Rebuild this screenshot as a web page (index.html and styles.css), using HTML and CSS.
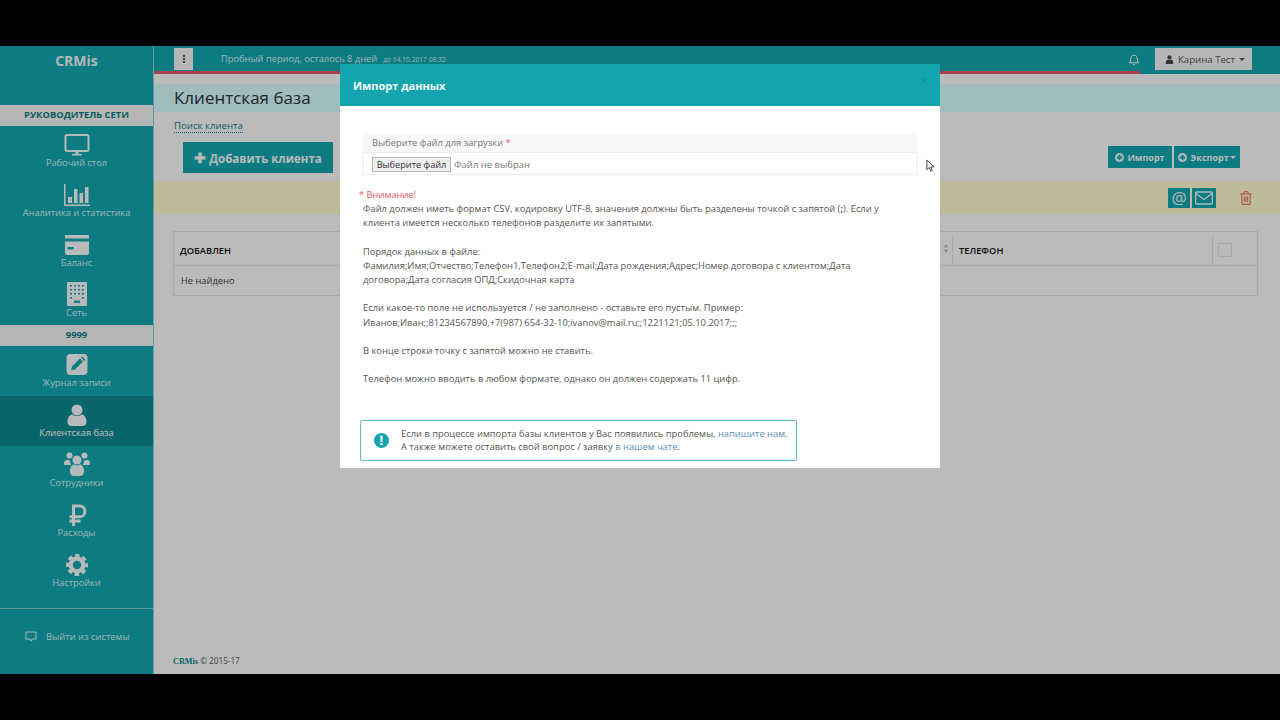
FILE: index.html
```html
<!DOCTYPE html>
<html lang="en">
<head>
  <meta charset="UTF-8" />
  <title>CRMis</title>
  <link rel="stylesheet" href="styles.css">
</head>
<body>

<div class="app">
  <!-- Sidebar -->
  <aside class="sidebar">
    <div class="logo">CRMis</div>
    <div class="band">РУКОВОДИТЕЛЬ СЕТИ</div>
    <a class="item">
      <svg class="ico" viewBox="0 0 26 22"><path fill="none" stroke="currentColor" stroke-width="2" d="M3 1h20a1.5 1.5 0 0 1 1.5 1.5v13a1.5 1.5 0 0 1-1.5 1.5H3a1.5 1.5 0 0 1-1.5-1.5v-13A1.5 1.5 0 0 1 3 1z"/><path fill="currentColor" d="M11.5 17h3v3h3.500v1.500H8V20h3.500z"/></svg>
      <span>Рабочий стол</span>
    </a>
    <a class="item">
      <svg class="ico" viewBox="0 0 26 22"><path fill="currentColor" d="M0 0h1.500v20.500H26V22H0zM4 13h4v6H4zM10 5h3.500v14H10zM15.500 9H19v10h-3.500zM21 3h3.500v16H21z"/></svg>
      <span>Аналитика и статистика</span>
    </a>
    <a class="item">
      <svg class="ico" viewBox="0 0 26 22"><path fill="currentColor" fill-rule="evenodd" d="M1 1h24v3.500H1zM1 7.500h24V19a2 2 0 0 1-2 2H3a2 2 0 0 1-2-2zM3.500 13v2.500h6V13z"/></svg>
      <span>Баланс</span>
    </a>
    <a class="item">
      <svg class="ico ico-tall" viewBox="0 0 26 24"><path fill="currentColor" fill-rule="evenodd" d="M4 0h18a1 1 0 0 1 1 1v22a1 1 0 0 1-1 1H4a1 1 0 0 1-1-1V1a1 1 0 0 1 1-1zM6 3v1.500h2V3zM10 3v1.500h2V3zM14 3v1.500h2V3zM18 3v1.500h2V3zM6 7v1.500h2V7zM10 7v1.500h2V7zM14 7v1.500h2V7zM18 7v1.500h2V7zM6 11v1.500h2V11zM10 11v1.500h2V11zM14 11v1.500h2V11zM18 11v1.500h2V11zM6 15v1.500h2V15zM18 15v1.500h2V15zM10 18.500V21h6v-2.500z"/></svg>
      <span>Сеть</span>
    </a>
    <div class="band band-num">9999</div>
    <a class="item">
      <svg class="ico" viewBox="0 0 26 22"><rect x="2.500" y="0" width="21" height="21" rx="4" fill="currentColor"/><path fill="#11a4ae" d="M16 4.500l3 3-8 8-4 1 1-4zM17 3.500l1-1 3.500 3.500-1 1z"/></svg>
      <span>Журнал записи</span>
    </a>
    <a class="item active">
      <svg class="ico" viewBox="0 0 26 22"><circle cx="13" cy="6" r="5.500" fill="currentColor"/><path fill="currentColor" d="M3.500 18c0-5 2.500-7.500 5-7.500 1 1 2.500 1.500 4.500 1.500s3.500-.5 4.500-1.500c2.500 0 5 2.500 5 7.500 0 2.500-1.500 4-4 4H7.500c-2.500 0-4-1.500-4-4z"/></svg>
      <span>Клиентская база</span>
    </a>
    <a class="item">
      <svg class="ico ico-tall" viewBox="0 0 26 24"><g fill="currentColor"><circle cx="5.500" cy="3.500" r="3"/><circle cx="20.500" cy="3.500" r="3"/><path d="M0 12c0-2.500 1-4 3-4h2.500L7 13H1.500C.5 13 0 12.800 0 12zM26 12c0-2.500-1-4-3-4h-2.500L19 13h5.500c1 0 1.500-.2 1.500-1z"/><circle cx="13" cy="8" r="4.500"/><path d="M6 19c0-4 2-6.500 4-6.500 1 .7 2 1 3 1s2-.3 3-1c2 0 4 2.500 4 6.500 0 3-1.500 5-4 5h-6c-2.500 0-4-2-4-5z"/></g></svg>
      <span>Сотрудники</span>
    </a>
    <a class="item">
      <svg class="ico" viewBox="0 0 26 22"><path fill="none" stroke="currentColor" stroke-width="3" d="M9.500 22V2h6a5.300 5.300 0 0 1 0 10.800H5.500M5.500 17h11"/></svg>
      <span>Расходы</span>
    </a>
    <a class="item">
      <svg class="ico" viewBox="0 0 26 22"><circle cx="13" cy="11" r="6.300" fill="none" stroke="currentColor" stroke-width="4.200"/><circle cx="13" cy="11" r="9.500" fill="none" stroke="currentColor" stroke-width="3" stroke-dasharray="4.500 2.960" stroke-dashoffset="2.250"/></svg>
      <span>Настройки</span>
    </a>
    <a class="logout">
      <svg class="logout-ico" viewBox="0 0 12 11"><path fill="none" stroke="currentColor" stroke-width="1.100" d="M1 1h10v7H7.500L6 9.800 4.500 8H1z"/></svg>
      <span>Выйти из системы</span>
    </a>
  </aside>

  <main class="main">
    <!-- Top bar -->
    <div class="topbar">
      <button class="menu-btn"><i></i><i></i><i></i></button>
      <span class="trial">Пробный период, осталось 8 дней</span>
      <span class="trial-date">до 14.10.2017 08:32</span>
      <svg class="bell" viewBox="0 0 12 12"><path fill="none" stroke="currentColor" stroke-width="1" d="M6 1.200c-2.200 0-3.200 1.600-3.200 3.600 0 2-.6 3-1.500 4h9.400c-.9-1-1.500-2-1.500-4 0-2-1-3.600-3.200-3.600zM4.800 10.200c.3.700 2.100.7 2.400 0"/></svg>
      <button class="user-btn">
        <svg class="user-ico" viewBox="0 0 10 10"><circle cx="5" cy="2.600" r="2.300" fill="currentColor"/><path fill="currentColor" d="M.8 10c-.3-3 1-4.800 2.300-5 .6.500 3.200.5 3.800 0 1.300.2 2.600 2 2.300 5z"/></svg>
        Карина Тест <b class="caret"></b>
      </button>
    </div>
    <div class="progress"></div>

    <div class="title-band"><h1>Клиентская база</h1></div>
    <div class="search-row"><a class="search-link">Поиск клиента</a></div>

    <div class="actions">
      <button class="add-btn"><span class="plus">✚</span> Добавить клиента</button>
      <div class="actions-right">
        <button class="small-btn"><svg class="circle-ico" viewBox="0 0 10 10"><path fill="currentColor" fill-rule="evenodd" d="M5 0a5 5 0 1 1 0 10A5 5 0 0 1 5 0zM4 2v2H2v2h2v2h2V6h2V4H6V2z"/></svg> Импорт</button>
        <button class="small-btn wide"><svg class="circle-ico" viewBox="0 0 10 10"><path fill="currentColor" fill-rule="evenodd" d="M5 0a5 5 0 1 1 0 10A5 5 0 0 1 5 0zM4 2v2H2v2h2v2h2V6h2V4H6V2z"/></svg> Экспорт<b class="caret"></b></button>
      </div>
    </div>

    <div class="tools">
      <span class="tool-btn at">@</span>
      <span class="tool-btn mail"><svg viewBox="0 0 18 14"><path fill="none" stroke="currentColor" stroke-width="1.300" d="M1.700 1h14.600a1 1 0 0 1 1 1v10a1 1 0 0 1-1 1H1.700a1 1 0 0 1-1-1V2a1 1 0 0 1 1-1zM1 2.500l8 6 8-6"/></svg></span>
      <svg class="trash" viewBox="0 0 12 14"><path fill="none" stroke="currentColor" stroke-width="1.100" d="M0 3h12M4 3V1.500C4 1 4.400.6 5 .6h2c.6 0 1 .4 1 .9V3M1.800 3v9.300c0 .7.400 1.100 1 1.100h6.400c.6 0 1-.4 1-1.100V3M4.300 5.500v5.500M6 5.500v5.500M7.700 5.500v5.500"/></svg>
    </div>

    <div class="table">
      <div class="table-head">
        <span class="col-date">ДОБАВЛЕН</span>
        <span class="col-sort">
          <svg viewBox="0 0 6 9"><path fill="currentColor" d="M3 0l2.500 3.500h-5zM3 9L.5 5.500h5z"/></svg>
        </span>
        <span class="col-phone">ТЕЛЕФОН</span>
        <span class="col-check"><i></i></span>
      </div>
      <div class="table-row">Не найдено</div>
    </div>

    <footer class="foot"><b>CRMis</b> © 2015-17</footer>
  </main>

  <!-- Modal -->
  <div class="backdrop">
    <div class="modal">
      <div class="modal-head">
        <span>Импорт данных</span>
        <span class="close">×</span>
      </div>
      <div class="modal-body">
        <div class="file-box">
          <div class="file-label">Выберите файл для загрузки <em>*</em></div>
          <div class="file-row">
            <button class="file-btn">Выберите файл</button>
            <span>Файл не выбран</span>
          </div>
        </div>
        <p class="warn">* Внимание!</p>
        <div class="rules">
          <p>Файл должен иметь формат CSV, кодировку UTF-8, значения должны быть разделены точкой с запятой (<b>;</b>). Если у клиента имеется несколько телефонов разделите их запятыми.</p>
          <p>Порядок данных в файле:<br>Фамилия;Имя;Отчество;Телефон1,Телефон2;E-mail;Дата рождения;Адрес;Номер договора с клиентом;Дата договора;Дата согласия ОПД;Скидочная карта</p>
          <p>Если какое-то поле не используется / не заполнено - оставьте его пустым. Пример:<br>Иванов;Иван;;81234567890,+7(987) 654-32-10;ivanov@mail.ru;;1221121;05.10.2017;;;</p>
          <p>В конце строки точку с запятой можно не ставить.</p>
          <p>Телефон можно вводить в любом формате, однако он должен содержать 11 цифр.</p>
        </div>
        <div class="notice">
          <svg class="notice-ico" viewBox="0 0 16 16"><circle cx="8" cy="8" r="8" fill="#12a5ad"/><path fill="#fff" d="M6.600 3h2.800l-.5 6.500H7.100zM6.800 10.700h2.400V13H6.800z"/></svg>
          <div>Если в процессе импорта базы клиентов у Вас появились проблемы, <a>напишите нам</a>.<br>А также можете оставить свой вопрос / заявку <a>в нашем чате</a>.</div>
        </div>
      </div>
    </div>
    <svg class="cursor" viewBox="0 0 10 15"><path fill="#fff" stroke="#333" stroke-width="1" d="M1 1v10.500l2.600-2.300 1.800 4 1.700-.8-1.800-3.900H9z"/></svg>
  </div>
</div>

</body>
</html>
```

FILE: styles.css
```css
:root {
  --teal: #12a5ad;
  --teal-side: #11a4ae;
  --teal-dark: #0d8790;
}

* {
  margin: 0;
  padding: 0;
  box-sizing: border-box;
  font-family: 'Open Sans', sans-serif;
}

body {
  background: #000;
  height: 720px;
  overflow: hidden;
}

button {
  border: none;
  cursor: pointer;
}

.app {
  position: relative;
  display: flex;
  height: 628px;
  margin-top: 46px;
  background: #fafafa;
}

/* Sidebar */
.sidebar {
  display: flex;
  flex-direction: column;
  width: 154px;
  flex-shrink: 0;
  background: var(--teal-side);
  border-right: 1px solid #7fd0d6;
  color: #eef6f7;
}

.logo {
  height: 59px;
  padding-top: 5px;
  text-align: center;
  font-size: 14px;
  font-weight: 700;
}

.band {
  height: 21px;
  line-height: 20px;
  text-align: center;
  background: #f2f2f2;
  color: #0d7b84;
  font-size: 9.4px;
  font-weight: 700;
}

.band-num {
  margin-top: -1px;
}

.item {
  display: flex;
  flex-direction: column;
  align-items: center;
  height: 50px;
  padding-top: 8px;
  font-size: 9.25px;
  line-height: 14px;
  color: #d8eef0;
}

.item.active {
  background: var(--teal-dark);
  color: #fff;
}

.ico {
  width: 26px;
  height: 22px;
  flex-shrink: 0;
  color: #f4f8f8;
}

.ico-tall {
  height: 24px;
  margin-top: -2px;
}

.logout {
  display: flex;
  align-items: center;
  gap: 9px;
  height: 66px;
  margin-top: 12px;
  padding: 0 0 10px 25px;
  border-top: 1px solid #7fd0d6;
  font-size: 9.4px;
  color: #d8eef0;
}

.logout-ico {
  width: 12px;
  height: 11px;
}

/* Main column */
.main {
  position: relative;
  display: flex;
  flex-direction: column;
  flex: 1;
  min-width: 0;
}

.topbar {
  display: flex;
  align-items: center;
  height: 25px;
  padding: 0 28px 0 20px;
  background: var(--teal-side);
  color: #d8eef0;
}

.menu-btn {
  display: flex;
  flex-direction: column;
  align-items: center;
  justify-content: center;
  gap: 1px;
  width: 19px;
  height: 22px;
  margin-top: 1px;
  background: #f2f2f2;
}

.menu-btn i {
  width: 2px;
  height: 2px;
  background: #555;
}

.trial {
  margin-left: 28px;
  font-size: 9.3px;
}

.trial-date {
  margin: 2px 0 0 6px;
  font-size: 6.7px;
}

.bell {
  width: 12px;
  height: 12px;
  margin: 2px 0 0 auto;
  color: #fff;
}

.user-btn {
  display: flex;
  align-items: center;
  gap: 4px;
  width: 97px;
  height: 22px;
  margin: 1px 0 0 15px;
  padding-left: 10px;
  background: #f2f2f2;
  color: #555;
  font-size: 9.65px;
}

.user-ico {
  width: 9px;
  height: 9px;
  color: #444;
}

.caret {
  display: inline-block;
  width: 0;
  height: 0;
  margin-left: 0;
  border-top: 3px solid currentColor;
  border-left: 3px solid transparent;
  border-right: 3px solid transparent;
  vertical-align: middle;
}

.progress {
  height: 3px;
  background: linear-gradient(to right, #e0596b 986px, var(--teal-side) 986px);
}

.title-band {
  height: 28px;
  margin-top: 10px;
  padding-left: 20px;
  background: #d6fbfd;
}

.title-band h1 {
  font-size: 17px;
  font-weight: 400;
  line-height: 28px;
  color: #2a3238;
}

.search-row {
  padding: 7px 0 0 20px;
  font-size: 9.65px;
  line-height: 14px;
}

.search-link {
  color: #12808a;
  border-bottom: 1px dotted #12808a;
}

.actions {
  display: flex;
  align-items: center;
  justify-content: space-between;
  height: 31px;
  margin-top: 9px;
  padding: 0 40px 0 29px;
}

.add-btn {
  width: 150px;
  height: 31px;
  background: var(--teal-side);
  color: #f4f8f8;
  font-size: 11.5px;
  font-weight: 700;
}

.plus {
  font-size: 14px;
}

.actions-right {
  display: flex;
  gap: 2px;
  margin-top: -1px;
}

.small-btn {
  display: flex;
  align-items: center;
  justify-content: center;
  gap: 3px;
  width: 64px;
  height: 22px;
  background: var(--teal-side);
  color: #f4f8f8;
  font-size: 9px;
  font-weight: 700;
}

.small-btn.wide {
  width: 66px;
}

.small-btn .caret {
  margin-left: -2px;
}

.circle-ico {
  width: 9px;
  height: 9px;
}

.tools {
  display: flex;
  align-items: center;
  height: 33px;
  margin-top: 8px;
  padding-left: 1014px;
  background: #fdfacb;
}

.tool-btn {
  display: flex;
  align-items: center;
  justify-content: center;
  height: 20px;
  background: var(--teal-side);
  color: #eef6f7;
}

.tool-btn.at {
  width: 22px;
  font-size: 17px;
}

.tool-btn.mail {
  width: 24px;
  margin-left: 2px;
}

.tool-btn.mail svg {
  width: 18px;
  height: 14px;
}

.trash {
  width: 12px;
  height: 14px;
  margin-left: 24px;
  color: #ee6a5e;
}

.table {
  margin: 17px 22px 0 19px;
  border: 1px solid #e2e2e2;
  color: #333;
  font-size: 9.3px;
}

.table-head {
  display: flex;
  align-items: center;
  height: 34px;
  padding-top: 3px;
  border-bottom: 1px solid #e2e2e2;
  font-size: 9.3px;
  font-weight: 600;
  color: #111;
}

.col-date {
  flex: 1;
  padding-left: 6px;
}

.col-sort {
  display: flex;
  justify-content: center;
  width: 12px;
  color: #bbb;
}

.col-sort svg {
  width: 6px;
  height: 9px;
  margin-bottom: 3px;
}

.col-phone {
  display: flex;
  align-items: center;
  width: 260px;
  height: 100%;
  padding-left: 6px;
  border-left: 1px solid #e2e2e2;
}

.col-check {
  display: flex;
  align-items: center;
  width: 45px;
  height: 100%;
  padding-left: 5px;
  border-left: 1px solid #e2e2e2;
}

.col-check i {
  width: 14px;
  height: 14px;
  border: 1px solid #e2e2e2;
}

.table-row {
  height: 29px;
  padding-left: 7px;
  line-height: 29px;
  color: #444;
}

.foot {
  position: absolute;
  left: 19px;
  bottom: 8px;
  font-size: 8.2px;
  color: #555;
}

.foot b {
  font-family: 'Liberation Serif', serif;
  color: #0d8790;
}

/* Modal over everything */
.backdrop {
  position: absolute;
  inset: 0;
  background: rgba(0, 0, 0, 0.25);
}

.modal {
  position: absolute;
  top: 18px;
  left: 340px;
  width: 600px;
  height: 404px;
  background: #fff;
}

.modal-head {
  display: flex;
  align-items: center;
  justify-content: space-between;
  height: 42px;
  padding: 0 13px;
  background: var(--teal);
  color: #f4fbfb;
  font-size: 11px;
  font-weight: 700;
}

.close {
  margin: -9px 0 0 0;
  font-size: 12px;
  font-weight: 400;
  color: #0f8d95;
}

.modal-body {
  padding: 28px 23px 0 20px;
  font-size: 9.35px;
  color: #555;
}

.file-box {
  margin-left: 3px;
}

.file-label {
  height: 18px;
  padding-left: 9px;
  line-height: 18px;
  background: #f8f8f8;
  font-size: 9.35px;
  color: #777;
}

.file-label em {
  font-style: normal;
  color: #e0596b;
}

.file-row {
  display: flex;
  align-items: center;
  gap: 3px;
  height: 23px;
  padding: 1px 0 0 8px;
  border: 1px solid #eee;
  font-size: 9.5px;
  color: #777;
}

.file-btn {
  width: 79px;
  height: 15px;
  background: #efefef;
  border: 1px solid #b5b5b5;
  font-size: 9.2px;
  color: #333;
}

.warn {
  margin: 13px 0 0 -1px;
  font-size: 9.35px;
  line-height: 14px;
  color: #e0596b;
}

.rules {
  width: 525px;
  margin: 0 0 0 3px;
  line-height: 14.3px;
}

.rules p {
  margin-bottom: 14px;
}

.notice {
  display: flex;
  align-items: center;
  gap: 12px;
  width: 437px;
  height: 41px;
  margin-top: 33px;
  padding-left: 13px;
  border: 1px solid #5fbcc2;
  border-radius: 2px;
  line-height: 13px;
}

.notice-ico {
  width: 15px;
  height: 15px;
  flex-shrink: 0;
}

.notice a {
  color: #5b8fb8;
}

.cursor {
  position: absolute;
  top: 113px;
  left: 926px;
  width: 9px;
  height: 14px;
}
```
